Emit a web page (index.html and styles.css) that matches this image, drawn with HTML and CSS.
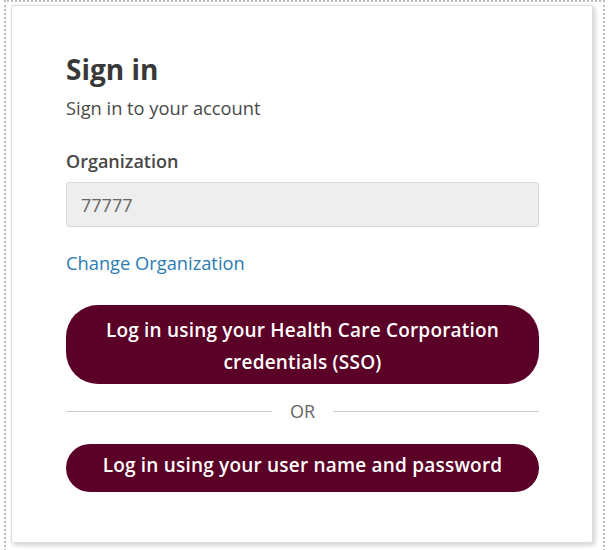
FILE: index.html
```html
<!DOCTYPE html>
<html lang="en">
<head>
<meta charset="utf-8">
<title>Sign in</title>
<link rel="stylesheet" href="styles.css">
</head>
<body>
<div class="frame">
  <div class="card">
    <h1 class="title">Sign in</h1>
    <p class="subtitle">Sign in to your account</p>
    <label class="label" for="org">Organization</label>
    <input class="input" id="org" type="text" value="77777" disabled>
    <a class="link" href="#">Change Organization</a>
    <button class="btn btn-sso" type="button">Log in using your Health Care Corporation<br>credentials (SSO)</button>
    <div class="divider"><span class="divider-line"></span><span class="divider-text">OR</span><span class="divider-line"></span></div>
    <button class="btn btn-user" type="button">Log in using your user name and password</button>
  </div>
</div>
</body>
</html>
```
FILE: styles.css
```css
html, body {
  margin: 0;
  padding: 0;
  background: #ffffff;
}
body {
  font-family: "Open Sans", "Liberation Sans", sans-serif;
  color: #333333;
  overflow: hidden;
}
.frame {
  margin-left: 4px;
  width: 592px;
  height: 560px;
  border: 2px dotted #bdbdbd;
  padding: 3px 0 0 5px;
  box-sizing: content-box;
}
.card {
  width: 473px;
  padding: 45px 53px 50px 54px;
  background: #ffffff;
  border: 1px solid #dedede;
  border-radius: 2px;
  box-shadow: 2px 2px 5px rgba(0, 0, 0, 0.2);
  display: flex;
  flex-direction: column;
}
.title {
  margin: 0;
  font-size: 28px;
  line-height: 36px;
  font-weight: 700;
  color: #383838;
}
.subtitle {
  margin: 9px 0 0;
  font-size: 18.3px;
  line-height: 24px;
  color: #4a4a4a;
}
.label {
  margin-top: 29px;
  font-size: 18px;
  line-height: 24px;
  font-weight: 600;
  color: #474747;
}
.input {
  margin: 9px 0 0;
  height: 45px;
  box-sizing: border-box;
  border: 1px solid #d9d9d9;
  border-radius: 3px;
  background: #eeeeee;
  padding: 0 14px;
  font-family: "Open Sans", "Liberation Sans", sans-serif;
  font-size: 18px;
  color: #666666;
  width: 100%;
}
.link {
  margin-top: 24px;
  font-size: 18.3px;
  line-height: 24px;
  color: #2b7bb0;
  text-decoration: none;
  align-self: flex-start;
}
.btn {
  width: 100%;
  border: none;
  background: #5b0026;
  color: #ffffff;
  font-family: "Open Sans", "Liberation Sans", sans-serif;
  font-weight: 600;
  font-size: 19px;
  letter-spacing: 0.2px;
  line-height: 32px;
  text-align: center;
  cursor: pointer;
}
.btn-sso {
  margin-top: 30px;
  height: 79px;
  padding: 9px 10px 6px;
  border-radius: 32px;
}
.btn-user {
  margin-top: 21px;
  height: 48px;
  padding: 5px 10px 11px;
  border-radius: 24px;
}
.divider {
  margin-top: 15px;
  display: flex;
  align-items: center;
  gap: 18px;
  height: 24px;
}
.divider-line {
  flex: 1;
  height: 1px;
  background: #cccccc;
}
.divider-text {
  font-size: 18px;
  line-height: 24px;
  color: #666666;
}
```
